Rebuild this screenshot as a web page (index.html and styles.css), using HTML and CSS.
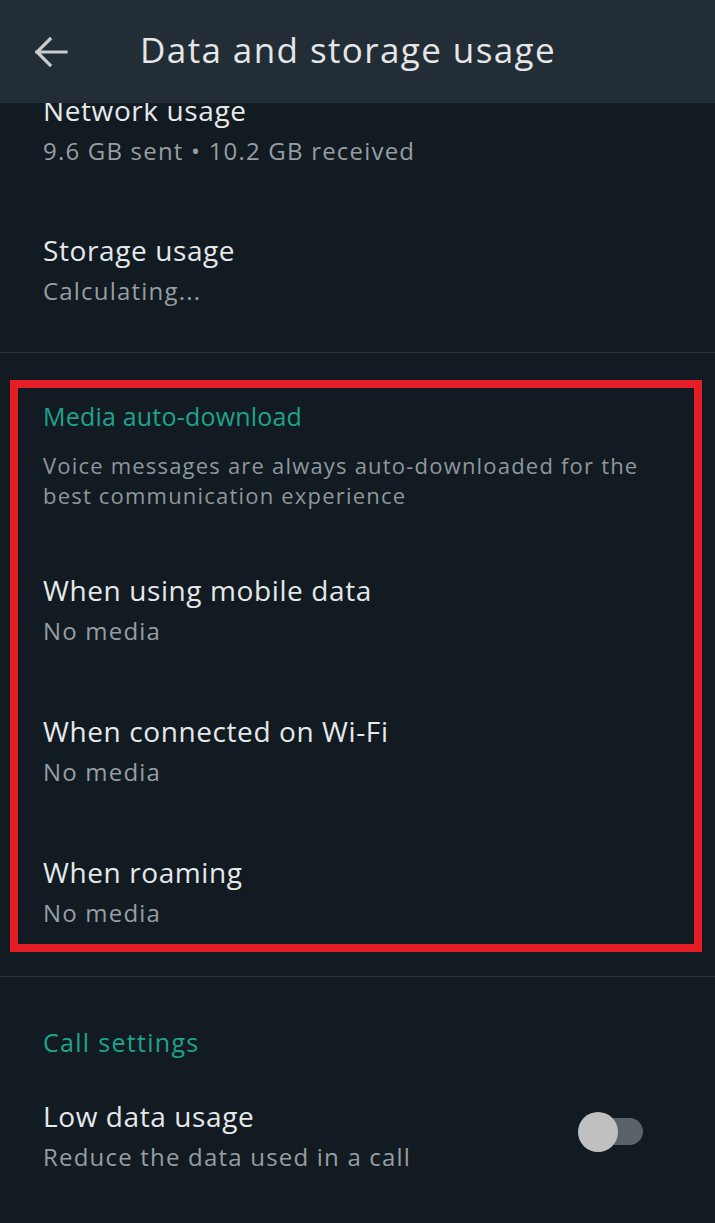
FILE: index.html
```html
<!DOCTYPE html>
<html lang="en">
<head>
<meta charset="utf-8">
<title>Data and storage usage</title>
<link rel="stylesheet" href="styles.css">
</head>
<body>
<header class="appbar">
  <button class="back" aria-label="Back">
    <svg width="34" height="32" viewBox="0 0 34 32" fill="none" stroke="currentColor" stroke-width="3.2" stroke-linecap="square" stroke-linejoin="miter">
      <path d="M32 16H3"/>
      <path d="M16 3L3 16L16 29"/>
    </svg>
  </button>
  <h1 class="appbar-title">Data and storage usage</h1>
</header>

<main class="content">
  <section class="group">
    <div class="row">
      <div class="row-title">Network usage</div>
      <div class="row-sub">9.6 GB sent • 10.2 GB received</div>
    </div>
    <div class="row">
      <div class="row-title">Storage usage</div>
      <div class="row-sub">Calculating...</div>
    </div>
  </section>

  <hr class="divider divider-top">

  <section class="highlight">
    <div class="section-head">Media auto-download</div>
    <p class="section-desc">Voice messages are always auto-downloaded for the best communication experience</p>
    <div class="rows">
      <div class="row">
        <div class="row-title">When using mobile data</div>
        <div class="row-sub">No media</div>
      </div>
      <div class="row">
        <div class="row-title">When connected on Wi-Fi</div>
        <div class="row-sub">No media</div>
      </div>
      <div class="row">
        <div class="row-title">When roaming</div>
        <div class="row-sub">No media</div>
      </div>
    </div>
  </section>

  <hr class="divider divider-bottom">

  <section class="calls">
    <div class="section-head">Call settings</div>
    <div class="row row-switch">
      <div class="row-text">
        <div class="row-title">Low data usage</div>
        <div class="row-sub">Reduce the data used in a call</div>
      </div>
      <div class="switch" role="switch" aria-checked="false">
        <span class="switch-track"></span>
        <span class="switch-thumb"></span>
      </div>
    </div>
  </section>
</main>
</body>
</html>
```

FILE: styles.css
```css
* { box-sizing: border-box; }

html, body {
  margin: 0;
  padding: 0;
  background: #111b21;
}

body {
  width: 715px;
  min-height: 1223px;
  font-family: "Open Sans", "Noto Sans", "DejaVu Sans", sans-serif;
  color: #e6e8ea;
  overflow: hidden;
}

.appbar {
  position: fixed;
  top: 0;
  left: 0;
  right: 0;
  height: 103px;
  background: #232d35;
  display: flex;
  align-items: center;
  z-index: 2;
}

.back {
  background: none;
  border: 0;
  padding: 0;
  margin: 0 0 0 34px;
  width: 34px;
  height: 32px;
  color: #c8cccf;
  display: flex;
  align-items: center;
  justify-content: center;
}

.appbar-title {
  margin: 0 0 4px 72px;
  font-size: 35px;
  font-weight: 400;
  color: #e4e6e8;
  letter-spacing: 1.4px;
}

.content {
  padding-top: 92px;
}

.row {
  display: flex;
  flex-direction: column;
}

.row-title {
  font-size: 28px;
  line-height: 36px;
  color: #e6e8ea;
  letter-spacing: 0.6px;
}

.row-sub {
  margin-top: 8px;
  font-size: 24px;
  line-height: 30px;
  color: #969ea3;
  letter-spacing: 1.2px;
}

.group {
  padding-left: 43px;
  display: flex;
  flex-direction: column;
  gap: 66px;
}

.divider {
  border: 0;
  height: 1px;
  background: #263139;
  margin: 0;
}

.divider-top { margin-top: 46px; }

.highlight {
  margin: 27px 0 0 10px;
  width: 692px;
  border: 8px solid #e51d25;
  padding: 12px 0 16px 25px;
}

.section-head {
  font-size: 25px;
  line-height: 32px;
  color: #1fa38b;
  letter-spacing: 0.2px;
}

.section-desc {
  margin: 18px 0 0;
  font-size: 22px;
  line-height: 30px;
  color: #8f979c;
  letter-spacing: 1.2px;
  width: 605px;
}

.rows {
  margin-top: 62px;
  display: flex;
  flex-direction: column;
  gap: 67px;
}

.divider-bottom { margin-top: 24px; }

.calls {
  padding: 49px 0 0 43px;
}

.calls .section-head {
  letter-spacing: 1.3px;
}

.row-switch {
  margin-top: 40px;
  flex-direction: row;
  align-items: center;
  justify-content: space-between;
  padding-right: 72px;
}

.row-text {
  display: flex;
  flex-direction: column;
}

.switch {
  position: relative;
  width: 65px;
  height: 40px;
  margin-top: -6px;
}

.switch-track {
  position: absolute;
  left: 10px;
  right: 0;
  top: 6px;
  height: 27px;
  border-radius: 14px;
  background: #5b6368;
}

.switch-thumb {
  position: absolute;
  left: 0;
  top: 0;
  width: 40px;
  height: 40px;
  border-radius: 50%;
  background: #c0c0c0;
}
```
